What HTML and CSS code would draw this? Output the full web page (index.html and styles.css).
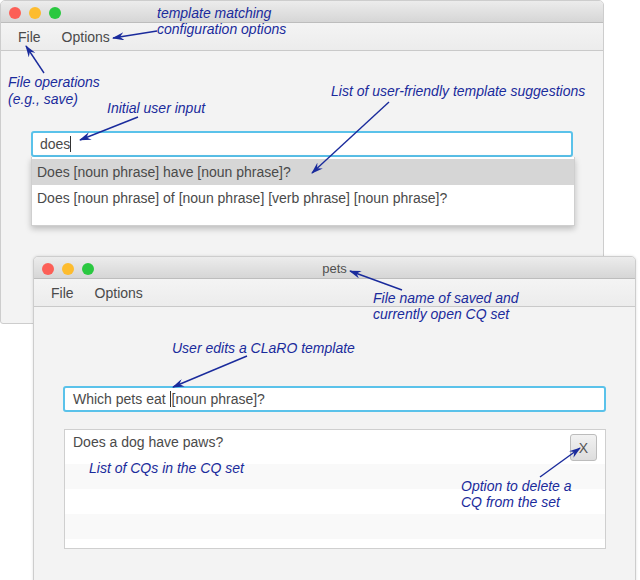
FILE: index.html
```html
<!DOCTYPE html>
<html>
<head>
<meta charset="utf-8">
<link rel="stylesheet" href="styles.css">
</head>
<body>
<div class="desk">
  <div class="win win1">
    <div class="titlebar">
      <div class="lights"><span class="light red"></span><span class="light yellow"></span><span class="light green"></span></div>
      <div class="title"></div>
    </div>
    <div class="menubar"><span class="menu">File</span><span class="menu">Options</span></div>
    <div class="body body1">
      <div class="field field1">does<span class="caret"></span></div>
      <div class="dropdown">
        <div class="opt sel">Does [noun phrase] have [noun phrase]?</div>
        <div class="opt">Does [noun phrase] of [noun phrase] [verb phrase] [noun phrase]?</div>
      </div>
    </div>
  </div>

  <div class="win win2">
    <div class="titlebar">
      <div class="lights"><span class="light red"></span><span class="light yellow"></span><span class="light green"></span></div>
      <div class="title">pets</div>
    </div>
    <div class="menubar"><span class="menu">File</span><span class="menu">Options</span></div>
    <div class="body body2">
      <div class="field field2">Which pets eat <span class="caret caret2"></span>[noun phrase]?</div>
      <div class="listbox">
        <div class="row row-first"><span class="cq">Does a dog have paws?</span><button class="del">X</button></div>
        <div class="row alt"></div>
        <div class="row"></div>
        <div class="row alt"></div>
        <div class="row last"></div>
      </div>
    </div>
  </div>

  <svg class="arrows" width="640" height="580" viewBox="0 0 640 580">
    <defs>
      <marker id="ah" viewBox="0 0 12 8" refX="11" refY="4" markerWidth="12" markerHeight="8" markerUnits="userSpaceOnUse" orient="auto">
        <path d="M0,0 L12,4 L0,8 L4,4 z" fill="#1a2b9c"/>
      </marker>
    </defs>
    <g stroke="#1a2b9c" stroke-width="1.4" fill="none" marker-end="url(#ah)">
      <line x1="157" y1="31" x2="113" y2="38"/>
      <line x1="44" y1="73" x2="26" y2="46"/>
      <line x1="138" y1="117" x2="80" y2="140"/>
      <line x1="389" y1="102" x2="312" y2="173"/>
      <line x1="402" y1="290" x2="350" y2="271"/>
      <line x1="247" y1="356" x2="173" y2="387"/>
      <line x1="540" y1="477" x2="580" y2="448"/>
    </g>
  </svg>

  <div class="note n-options">template matching<br>configuration options</div>
  <div class="note n-file">File operations<br>(e.g., save)</div>
  <div class="note n-input">Initial user input</div>
  <div class="note n-sugg">List of user-friendly template suggestions</div>
  <div class="note n-pets">File name of saved and<br>currently open CQ set</div>
  <div class="note n-claro">User edits a CLaRO template</div>
  <div class="note n-list">List of CQs in the CQ set</div>
  <div class="note n-del">Option to delete a<br>CQ from the set</div>
</div>
</body>
</html>
```

FILE: styles.css
```css
html, body {
  margin: 0;
  padding: 0;
  background: #ffffff;
}
.desk {
  position: relative;
  width: 640px;
  height: 580px;
  overflow: hidden;
  font-family: "Liberation Sans", Arial, sans-serif;
}
.win {
  position: absolute;
  box-sizing: border-box;
  background: #f3f3f3;
  border: 1px solid #cdcdcd;
  border-radius: 5px 5px 3px 3px;
  display: flex;
  flex-direction: column;
  overflow: hidden;
}
.win1 {
  left: 0;
  top: 0;
  width: 604px;
  height: 324px;
}
.win2 {
  left: 33px;
  top: 256px;
  width: 603px;
  height: 340px;
  box-shadow: 0 0 3px rgba(0,0,0,0.12);
}
.titlebar {
  height: 21px;
  background: linear-gradient(#ececec, #d6d6d6);
  border-bottom: 1px solid #bdbdbd;
  position: relative;
  display: flex;
  align-items: center;
  justify-content: center;
  flex-shrink: 0;
}
.lights {
  position: absolute;
  left: 8px;
  top: 6px;
  display: flex;
  gap: 8px;
}
.light {
  width: 12px;
  height: 12px;
  border-radius: 50%;
  display: block;
}
.red { background: #fc5f57; }
.yellow { background: #fdbc2e; }
.green { background: #2ac840; }
.title {
  font-size: 13px;
  color: #505050;
  padding-top: 1px;
}
.menubar {
  height: 27px;
  background: linear-gradient(#f4f4f4, #ececec);
  border-bottom: 1px solid #c9c9c9;
  display: flex;
  align-items: center;
  padding-left: 17px;
  gap: 21px;
  flex-shrink: 0;
}
.menu {
  font-size: 14px;
  color: #4a4a4a;
}
.body {
  flex: 1;
  display: flex;
  flex-direction: column;
}
.body1 {
  padding: 80px 0 0 30px;
}
.body2 {
  padding: 79px 0 0 29px;
}
.field {
  box-sizing: border-box;
  height: 26px;
  border: 2px solid #5ac2ea;
  border-radius: 3px;
  background: #ffffff;
  font-size: 14px;
  color: #4a4a4a;
  display: flex;
  align-items: center;
  white-space: pre;
}
.field1 {
  width: 542px;
  padding-left: 7px;
}
.field2 {
  width: 543px;
  padding-left: 8px;
}
.caret {
  display: inline-block;
  width: 1px;
  height: 16px;
  background: #333;
}
.caret2 {
  margin-right: 1px;
}
.dropdown {
  box-sizing: border-box;
  width: 544px;
  height: 69px;
  background: #ffffff;
  border: 1px solid #cfcfcf;
  border-top: none;
  box-shadow: 0 3px 6px rgba(0,0,0,0.22);
  padding-top: 2px;
  display: flex;
  flex-direction: column;
}
.opt {
  height: 26px;
  line-height: 26px;
  font-size: 14px;
  color: #4a4a4a;
  padding-left: 5px;
  white-space: nowrap;
}
.opt.sel {
  background: #d6d6d6;
}
.listbox {
  box-sizing: border-box;
  margin-top: 17px;
  margin-left: 1px;
  width: 542px;
  height: 120px;
  background: #ffffff;
  border: 1px solid #cfcfcf;
  display: flex;
  flex-direction: column;
}
.row {
  height: 25px;
  flex-shrink: 0;
}
.row.alt {
  background: #f9f9f9;
}
.row.last {
  flex: 1;
}
.row-first {
  height: 34px;
  display: flex;
  justify-content: space-between;
  align-items: flex-start;
  padding: 0 8px 0 8px;
  box-sizing: border-box;
}
.cq {
  font-size: 14px;
  color: #4a4a4a;
  line-height: 24px;
}
.del {
  margin-top: 4px;
  width: 27px;
  height: 27px;
  padding: 0;
  border: 1px solid #bcbcbc;
  border-radius: 3px;
  background: linear-gradient(#f2f2f2, #dddddd);
  font-family: "Liberation Sans", Arial, sans-serif;
  font-size: 14px;
  color: #555555;
}
.arrows {
  position: absolute;
  left: 0;
  top: 0;
  pointer-events: none;
}
.note {
  position: absolute;
  font-family: "Liberation Sans", Arial, sans-serif;
  font-style: italic;
  font-size: 14px;
  line-height: 16px;
  color: #1a2b9c;
  white-space: nowrap;
}
.n-options { left: 157px; top: 5px; }
.n-file { left: 8px; top: 74px; line-height: 17px; }
.n-input { left: 107px; top: 100px; }
.n-sugg { left: 331px; top: 83px; }
.n-pets { left: 373px; top: 290px; }
.n-claro { left: 172px; top: 340px; }
.n-list { left: 89px; top: 460px; }
.n-del { left: 461px; top: 478px; }
```
